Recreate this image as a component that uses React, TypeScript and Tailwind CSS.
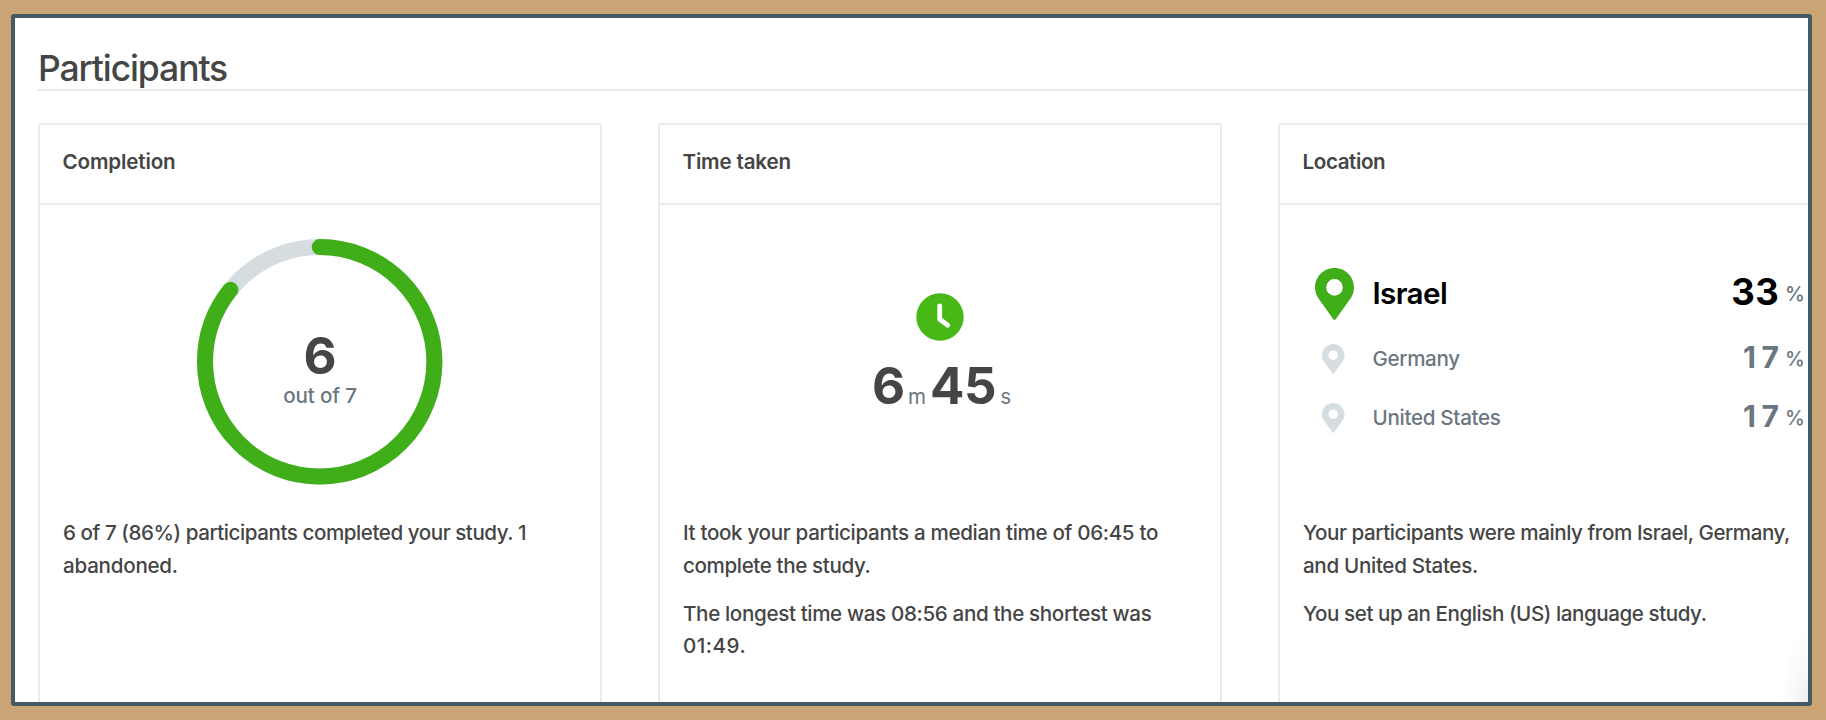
import type { ReactNode } from "react";

function Card({ title, titleClass, children }: { title: string; titleClass: string; children: ReactNode }) {
  return (
    <section className="flex h-[620px] w-[564px] shrink-0 flex-col rounded-[3px] border-2 border-[#ebebeb] bg-white">
      <header className="flex h-[80px] shrink-0 items-center border-b-2 border-[#ebebeb] px-[22.5px] pb-[4px]">
        <h2 className={`text-[20.6px] leading-[32px] font-semibold text-[#454545] ${titleClass}`}>{title}</h2>
      </header>
      {children}
    </section>
  );
}

function Line({ className, children }: { className: string; children: ReactNode }) {
  return <span className={`block whitespace-nowrap ${className}`}>{children}</span>;
}

function Body({ children }: { children: ReactNode }) {
  return (
    <div className="flex flex-col gap-[15.5px] px-[23px] pt-[1px] text-[20.6px] leading-[32.5px] font-[450] text-[#454545]">
      {children}
    </div>
  );
}

function CompletionRing({ done, total }: { done: number; total: number }) {
  const radius = 114.7;
  const length = 2 * Math.PI * radius;
  return (
    <svg className="h-[246px] w-[246px]" viewBox="0 0 246 246" fill="none">
      <circle cx="122.7" cy="122.8" r={radius} stroke="#d5dde0" strokeWidth="16" />
      <circle
        cx="122.7"
        cy="122.8"
        r={radius}
        stroke="#3fae18"
        strokeWidth="16"
        strokeLinecap="round"
        strokeDasharray={`${(length * done) / total} ${length}`}
        transform="rotate(-90 122.7 122.8)"
      />
    </svg>
  );
}

function Clock() {
  return (
    <svg className="h-[48px] w-[48px]" viewBox="0 0 48 48" fill="none">
      <circle cx="24" cy="24" r="23.7" fill="#48b817" />
      <path d="M23.7 12.8V26.3L31.8 32.2" stroke="#fff" strokeWidth="4.8" strokeLinecap="round" strokeLinejoin="round" />
    </svg>
  );
}

function Pin({ className }: { className: string }) {
  return (
    <svg className={className} viewBox="0 0 39 52" fill="currentColor">
      <path
        fillRule="evenodd"
        d="M19.5 0C8.7 0 0 8.7 0 19.5C0 24 1.5 27.8 4.2 31.6L18.3 51.3C18.9 52.1 20.1 52.1 20.7 51.3L34.8 31.6C37.5 27.8 39 24 39 19.5C39 8.7 30.3 0 19.5 0ZM19.5 11.1A8.3 8.3 0 1 1 19.5 27.7A8.3 8.3 0 1 1 19.5 11.1Z"
      />
    </svg>
  );
}

function Percent() {
  return <span className="w-[25px] pl-[6px] text-[20px] leading-[36px] font-medium">%</span>;
}

function MinorCountry({ name, nameClass }: { name: string; nameClass: string }) {
  return (
    <div className="flex h-[59px] items-center">
      <div className="ml-[42px] w-[50.5px]">
        <Pin className="h-[30px] w-[22.5px] text-[#d5dde0]" />
      </div>
      <span className={`leading-[32px] font-[450] ${nameClass}`}>{name}</span>
      <div className="ml-auto flex items-end pb-[4px] leading-[40px]">
        <span className="text-[30px] font-bold">
          <span className="tracking-[5.5px]">1</span>7
        </span>
        <Percent />
      </div>
    </div>
  );
}

export default function App() {
  return (
    <div className="h-[720px] w-[1826px] overflow-hidden bg-[#cba575] pt-[14px] pl-[11px] font-['Inter',sans-serif]">
      <main className="relative flex h-[692px] w-[1801px] flex-col overflow-hidden rounded-[3px] border-4 border-[#465a64] bg-white pl-[23px]">
        <div className="h-[73px] w-[1800px] shrink-0 border-b-2 border-[#ebebeb] pt-[29px]">
          <h1 className="text-[35.5px] leading-[44px] font-[450] tracking-[-1.1px] text-[#454545]">Participants</h1>
        </div>

        <div className="mt-[32px] flex gap-[56px]">
          <Card title="Completion" titleClass="tracking-[-0.15px]">
            <div className="grid h-[311px] shrink-0 justify-center pt-[34px]">
              <div className="col-start-1 row-start-1">
                <CompletionRing done={6} total={7} />
              </div>
              <div className="col-start-1 row-start-1 flex flex-col items-center pt-[87px]">
                <span className="text-[51px] leading-[60px] font-bold text-[#454545]">6</span>
                <span className="-mt-[4px] text-[20.6px] leading-[28px] font-[450] tracking-[-0.15px] text-[#6b767f]">
                  out of 7
                </span>
              </div>
            </div>
            <Body>
              <p>
                <Line className="tracking-[-0.45px]">6 of 7 (86%) participants completed your study. 1</Line>
                <Line className="tracking-[-0.25px]">abandoned.</Line>
              </p>
            </Body>
          </Card>

          <Card title="Time taken" titleClass="tracking-[-0.18px]">
            <div className="flex h-[311px] shrink-0 flex-col items-center pt-[88px]">
              <Clock />
              <div className="mt-[15px] ml-[3px] flex items-baseline text-[20.6px] leading-[60px] text-[#6b767f]">
                <span className="text-[51px] font-bold text-[#454545]">6</span>
                <span className="ml-[3px]">m</span>
                <span className="ml-[4px] text-[51px] font-bold tracking-[-0.5px] text-[#454545]">45</span>
                <span className="ml-[4px]">s</span>
              </div>
            </div>
            <Body>
              <p>
                <Line className="tracking-[-0.33px]">It took your participants a median time of 06:45 to</Line>
                <Line className="tracking-[-0.38px]">complete the study.</Line>
              </p>
              <p>
                <Line className="tracking-[-0.35px]">The longest time was 08:56 and the shortest was</Line>
                <Line className="tracking-[0.5px]">01:49.</Line>
              </p>
            </Body>
          </Card>

          <Card title="Location" titleClass="tracking-[-0.4px]">
            <div className="flex h-[311px] w-[524px] shrink-0 flex-col pt-[53px] text-[20.6px] text-[#6b767f]">
              <div className="flex h-[71px] items-center">
                <div className="ml-[35px] w-[57.5px]">
                  <Pin className="h-[52px] w-[39px] text-[#3fae18]" />
                </div>
                <span className="pb-[1px] text-[29.7px] leading-[40px] font-semibold tracking-[-0.65px] text-black">
                  Israel
                </span>
                <div className="ml-auto flex items-end pb-[3px] leading-[40px]">
                  <span className="text-[36.5px] font-bold tracking-[0.3px] text-black">33</span>
                  <Percent />
                </div>
              </div>
              <MinorCountry name="Germany" nameClass="tracking-[-0.35px]" />
              <MinorCountry name="United States" nameClass="tracking-[-0.3px]" />
            </div>
            <Body>
              <p>
                <Line className="tracking-[-0.44px]">Your participants were mainly from Israel, Germany,</Line>
                <Line className="tracking-[-0.32px]">and United States.</Line>
              </p>
              <p>
                <Line className="tracking-[-0.44px]">You set up an English (US) language study.</Line>
              </p>
            </Body>
          </Card>
        </div>
        <div className="pointer-events-none absolute right-0 bottom-0 h-[78px] w-[28px] bg-[radial-gradient(ellipse_farthest-side_at_100%_100%,rgba(0,0,0,0.07),rgba(0,0,0,0.025)_50%,transparent)]" />
      </main>
    </div>
  );
}
